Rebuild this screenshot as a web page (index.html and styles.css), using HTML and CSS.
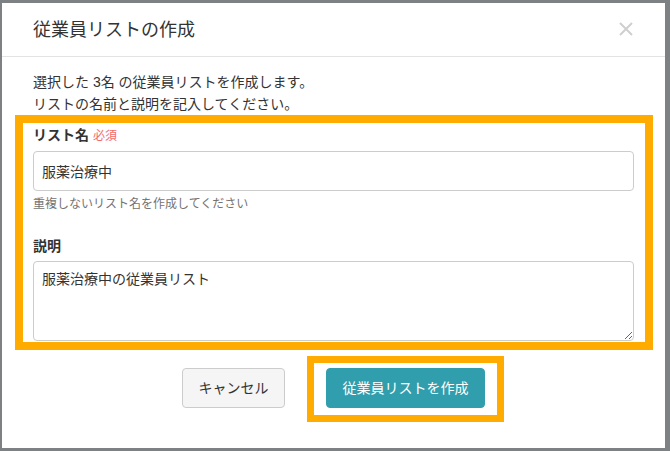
FILE: index.html
```html
<!DOCTYPE html>
<html lang="ja">
  <head>
    <meta charset="utf-8" />
    <title>従業員リストの作成</title>
    <link rel="stylesheet" href="styles.css">
  </head>
  <body>
    <div class="backdrop">
      <div class="modal">
        <div class="modal-header">
          <h4 class="modal-title">従業員リストの作成</h4>
          <span class="close" aria-label="閉じる">
            <svg width="14" height="14" viewBox="0 0 14 14">
              <path d="M1 1 L13 13 M13 1 L1 13" stroke="#cfcfcf" stroke-width="2" fill="none" />
            </svg>
          </span>
        </div>

        <div class="modal-body">
          <p class="lead-text">
            選択した 3名 の従業員リストを作成します。<br />
            リストの名前と説明を記入してください。
          </p>

          <div class="highlight-box">
            <div class="form-group">
              <label class="form-label" for="listName">リスト名 <span class="required">必須</span></label>
              <input type="text" id="listName" class="form-control" value="服薬治療中" />
              <div class="help-block">重複しないリスト名を作成してください</div>
            </div>

            <div class="form-group">
              <label class="form-label" for="listDesc">説明</label>
              <textarea id="listDesc" class="form-control textarea">服薬治療中の従業員リスト</textarea>
            </div>
          </div>
        </div>

        <div class="modal-footer">
          <button class="btn btn-default">キャンセル</button>
          <span class="highlight-btn">
            <button class="btn btn-primary">従業員リストを作成</button>
          </span>
        </div>
      </div>
    </div>
  </body>
</html>
```

FILE: styles.css
```css
html,
body {
  margin: 0;
  padding: 0;
}

body {
  width: 670px;
  height: 451px;
  overflow: hidden;
  background: #7e8183;
  font-family: "Liberation Sans", "Noto Sans CJK JP", sans-serif;
  color: #333;
}

.backdrop {
  height: 451px;
  padding: 3px 5px 3px 2px;
  box-sizing: border-box;
}

.modal {
  width: 663px;
  height: 445px;
  background: #fff;
  display: flex;
  flex-direction: column;
}

.modal-header {
  height: 53px;
  display: flex;
  align-items: center;
  justify-content: space-between;
  padding: 0 32px 0 31px;
  border-bottom: 1px solid #e3e3e3;
}

.modal-title {
  margin: 0;
  font-size: 18px;
  font-weight: 400;
  line-height: 24px;
  color: #333;
}

.close {
  display: flex;
  width: 14px;
  height: 14px;
  margin-top: -2px;
}

.modal-body {
  padding: 14px 31px 0 31px;
}

.lead-text {
  margin: 0;
  font-size: 14px;
  line-height: 22px;
}

.highlight-box {
  margin: 0 -19px 0 -18px;
  padding: 1px 11px 1px 10px;
  border: 8px solid #ffab00;
}

.form-group + .form-group {
  margin-top: 22px;
}

.form-label {
  display: block;
  margin-bottom: 4px;
  font-size: 14px;
  font-weight: 700;
  line-height: 22px;
}

.required {
  font-size: 12px;
  font-weight: 400;
  color: #f26a6a;
}

.form-control {
  display: block;
  width: 100%;
  height: 40px;
  padding: 0 8px;
  box-sizing: border-box;
  border: 1px solid #ccc;
  border-radius: 4px;
  font-family: "Liberation Sans", "Noto Sans CJK JP", sans-serif;
  font-size: 14px;
  color: #333;
  background: #fff;
}

.textarea {
  height: 80px;
  padding: 6px 8px;
  line-height: 22px;
  resize: vertical;
}

.help-block {
  margin-top: 4px;
  font-size: 12px;
  line-height: 18px;
  color: #737373;
}

.modal-footer {
  display: flex;
  justify-content: center;
  align-items: center;
  gap: 41px;
  padding-top: 18px;
}

.btn {
  height: 40px;
  padding: 0;
  border-radius: 4px;
  font-family: "Liberation Sans", "Noto Sans CJK JP", sans-serif;
  font-size: 14px;
  line-height: 38px;
  white-space: nowrap;
  cursor: pointer;
}

.btn-default {
  width: 103px;
  background: #f5f5f5;
  border: 1px solid #ccc;
  color: #333;
}

.btn-primary {
  width: 159px;
  background: #319ead;
  border: 1px solid #319ead;
  color: #fff;
}

.highlight-btn {
  display: flex;
  margin: -12px -19px -14px;
  padding: 5px 12px 7px;
  border: 7px solid #ffab00;
}
```
